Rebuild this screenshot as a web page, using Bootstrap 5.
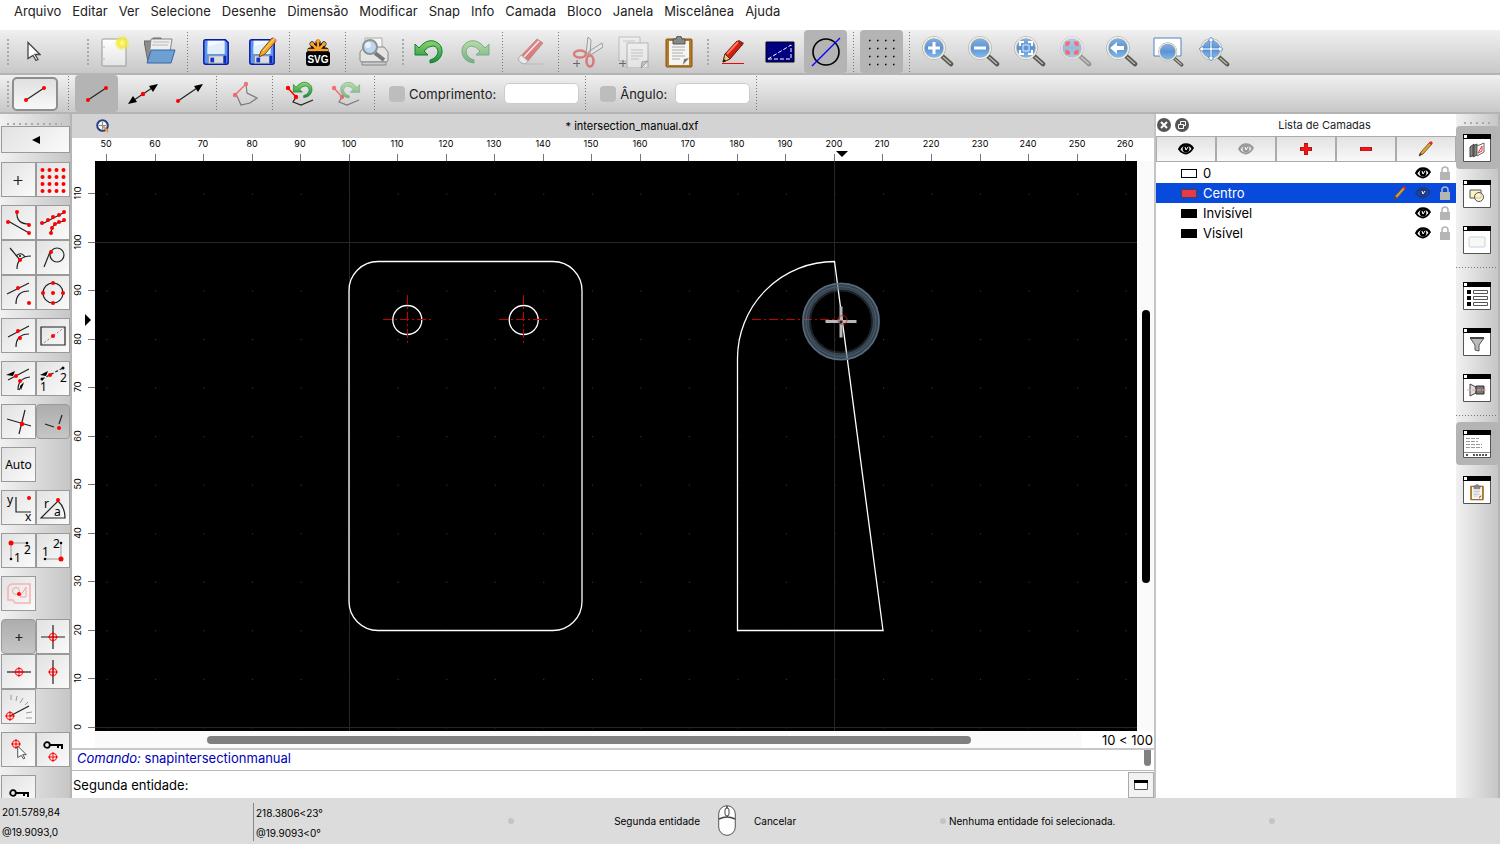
<!DOCTYPE html>
<html lang="pt">
<head>
<meta charset="utf-8">
<meta name="viewport" content="width=device-width, initial-scale=1">
<title>intersection_manual.dxf</title>
<link href="https://cdn.jsdelivr.net/npm/bootstrap@5.3.0/dist/css/bootstrap.min.css" rel="stylesheet">
<style>
body{font-family:Inter,"Liberation Sans",sans-serif;font-size:13px;line-height:20px;color:#000;background:#fff}
svg{display:block;flex:none}
button{border:0;background:none;padding:0;color:#000}
.menubar{height:30px;padding:0 14px 8px;gap:11px}
.menubar a{color:#222;text-decoration:none}
.toolstrip{background:linear-gradient(#f0f0f0,#c8c8c8);border-bottom:2px solid #b4b4b4;padding-left:3px;gap:3px}
.menubar,.toolstrip,.status{flex-shrink:0}
.strip-main{height:45px}
.strip-opts{height:39px}
.tool{width:43px;height:100%;display:flex;align-items:center;justify-content:center;border-radius:4px;flex:none}
.tool.active{background:#b4b4b4}
.pick{margin-right:25px}
.current{width:46px;height:34px;border:2px solid #8e8e8e;border-radius:5px;background:linear-gradient(#e0e0e0,#f8f8f8)}
.divider{width:7px;height:40px;flex:none;background:repeating-linear-gradient(#777 0 1px,transparent 1px 3px) center/1px 100% no-repeat}
.strip-opts .divider{height:35px}
.grip{width:6px;height:26px;flex:none;background:repeating-linear-gradient(#aaa 0 2px,transparent 2px 4px) right/2px 100% no-repeat}
.off{opacity:.5}
.optcheck{appearance:none;width:16px;height:16px;border-radius:4px;background:#bdbdbd;margin:0}
.optfield{width:75px;height:21px;border:1px solid #ccc;border-radius:5px;background:#fff}
.strip-opts label{color:#222;line-height:20px}
.side{width:72px;flex:none;overflow:hidden;background:linear-gradient(90deg,#f1f1f1,#c6c6c6);border-right:2px solid #b5b5b5;padding:9px 0 0 1px}
.dots-h{height:2px;margin:0 8px 1px 6px;background:repeating-linear-gradient(90deg,#aaa 0 2px,transparent 2px 6px)}
.key{width:100%;height:35px;border:1px solid #9a9a9a;background:linear-gradient(135deg,#e2e2e2,#fafafa);display:flex;align-items:center;justify-content:center}
.key.wide{height:27px;margin-bottom:9px}
.key.active{background:linear-gradient(#adadad,#c6c6c6);border-radius:4px}
.keys{display:grid;grid-template-columns:35px 34px;margin-bottom:8px}
.auto{font-family:"Noto Sans","DejaVu Sans",sans-serif;font-size:12px}
.tabline{height:24px;background:#d3d3d3;padding-left:24px;font-size:11px}
.sheet{display:grid;grid-template-columns:23px minmax(0,1fr) 17px;grid-template-rows:23px minmax(0,1fr) 17px}
.doc{border-right:2px solid #c4c4c4}
.paper{background:#000}
.trough{background:#fafafa}
.thumb-v{width:8px;height:273px;border-radius:4px;background:#000;margin:149px auto 0 5px}
.thumb-h{height:8px;border-radius:4px;background:#7f7f7f;margin:5px 111px 0 112px}
.zoomval{width:72px;background:#fff;line-height:18px;text-align:right;padding-right:1px}
.log{height:23px;border-top:2px solid #c8c8c8;border-bottom:1px solid #b8b8b8;color:#0000b8;padding-left:5px;line-height:17px}
.log-thumb{width:7px;height:16px;background:#808080;border-radius:0 0 4px 4px;margin-right:3px}
.prompt-row{height:27px;padding-left:1px}
.prompt-row input{border:0;outline:0;height:24px;min-width:0}
.prompt-row button{width:26px;height:26px;border:1px solid #aaa;background:#f2f2f2}
.layers{width:300px;flex:none}
.layers header{height:22px;font-size:11px;line-height:22px;padding-left:1px;gap:4px;color:#222}
.layer-tools button{height:26px;border:1px solid #ababab;background:linear-gradient(#e2e2e2,#f9f9f9);flex:1}
.layer-list{padding-top:1px}
.layer{height:20px;padding-left:25px;padding-right:5px}
.layer.sel{background:#084bdc;color:#fff}
.chip{width:16px;height:9px;border:1px solid #000;margin-right:6px}
.dock{width:44px;flex:none;background:linear-gradient(90deg,#f1f1f1,#c6c6c6);border-right:2px solid #b5b5b5;padding-top:8px;gap:2px}
.dock .dots-h{width:26px;margin:0}
.dock .tool{height:43px;margin-bottom:1px}
.divider-h{height:7px;width:100%;flex:none;margin-bottom:1px;background:repeating-linear-gradient(90deg,#777 0 1px,transparent 1px 3px) center/100% 1px no-repeat}
.status{height:46px;background:#dcdcdc;font-size:10px;line-height:20px}
.coord{width:253px;padding:4px 2px 0}
.coord+.coord{width:251px;border-left:1px solid #888;margin-top:5px;padding-top:0;height:38px}
.led{width:6px;height:6px;border-radius:50%;background:#c4c4c4;flex:none}
.hint{display:grid;grid-template-columns:1fr auto 1fr;gap:18px;align-items:center}
.note{width:323px;padding-left:3px}
.tail{width:225px}
.ink{fill:none;stroke:#222;stroke-width:1.2}
.pt{fill:#f00}
</style>
</head>
<body>
<svg width="0" height="0" class="position-absolute" aria-hidden="true">
<defs>
<linearGradient id="gb" x2="0" y2="1"><stop stop-color="#86b2e2"/><stop offset=".5" stop-color="#5d93d4"/><stop offset="1" stop-color="#82bdf4"/></linearGradient>
<linearGradient id="gp" x2="0" y2="1"><stop stop-color="#fff"/><stop offset="1" stop-color="#e4e4e4"/></linearGradient>
<linearGradient id="gg" x2="0" y2="1"><stop stop-color="#8ed46b"/><stop offset="1" stop-color="#1c8c3b"/></linearGradient>
<radialGradient id="gy"><stop stop-color="#fffbb0"/><stop offset=".5" stop-color="#f3ea3c"/><stop offset="1" stop-color="#f3ea3c" stop-opacity="0"/></radialGradient>
</defs>
<symbol id="lens" viewBox="0 0 32 32"><path d="M20 20l9 8" stroke="#55584f" stroke-width="4.500" stroke-linecap="round"/><path d="M21 21l8 7" stroke="#b9bab3" stroke-width="1.5"/><circle cx="12" cy="12" r="10.5" fill="url(#gb)" stroke="#a9aca4" stroke-width="2.6"/><circle cx="12" cy="12" r="10.5" fill="none" stroke="#eeeeec" stroke-width="1.4"/></symbol>
<symbol id="floppy" viewBox="0 0 32 32"><path d="M5 3h21l3 3v21q0 2-2 2H5q-2 0-2-2V5q0-2 2-2z" fill="#5d94ec" stroke="#0b1ca8" stroke-width="1.6"/><path d="M7 4h18v14H7z" fill="#f6faff"/><path d="M7 10l18-5v13H7z" fill="#e2eefb"/><path d="M8 20h16v8H8z" fill="#dadde6" stroke="#899"/><path d="M10 22h4v5h-4z" fill="#1635c8"/><path d="M24 20h3v8h-3z" fill="#0c2ac0"/></symbol>
<symbol id="eye" viewBox="0 0 16 12"><path d="M1 7Q3 1.500 8 1.500q5 0 7 4.500" fill="none" stroke="currentColor" stroke-width="2.600"/><path d="M1.500 7q6.500 7.500 13-1" fill="none" stroke="currentColor" stroke-width="1.8"/><circle cx="8" cy="6" r="3.4" fill="currentColor"/><path d="M7 4l1 3 2-3" stroke="#fff" fill="none"/></symbol>
<symbol id="lock" viewBox="0 0 12 14"><path d="M3 7V4q0-3 3-3t3 3v3" fill="none" stroke="#b5b5b5" stroke-width="1.6"/><path d="M1 6h10v8H1z" fill="#b5b5b5"/></symbol>
<symbol id="pencil" viewBox="0 0 16 16"><path d="M1 15l2-4 9-10 2 2-9 10z" fill="#dca33a" stroke="#8a5c22"/><path d="M11 2l2-2 2 2-2 2z" fill="#e22"/><path d="M1 15l1-3 2 1z" fill="#333"/></symbol>
<symbol id="win" viewBox="0 0 28 28"><path d="M.5.500h27v27H.5z" fill="#fff" stroke="#555"/><path d="M0 0h28v5H0z"/><path d="M1 1h3v3H1z" fill="#fff"/></symbol>
<symbol id="target" viewBox="0 0 10 10"><circle cx="5" cy="5" r="3.700" fill="none" stroke="#f00"/><path d="M0 5h10M5 0v10" stroke="#f00"/></symbol>
<symbol id="back" viewBox="0 0 32 32"><path d="M2 8l4 4Q13 3 21 5q9 3 8 12-2 9-12 10v-3q7-2 8-8 0-5-5-6-5 0-9 5l4 4H2z" fill="url(#gg)" stroke="#11803a"/></symbol>
<symbol id="key" viewBox="0 0 20 10"><circle cx="4" cy="5" r="2.800" fill="none" stroke="#000" stroke-width="1.800"/><path d="M7 5h12v4M15 5v3" fill="none" stroke="#000" stroke-width="2"/></symbol>
<symbol id="arrow" viewBox="0 0 14 20"><path d="M1 1l12 12H8l3 5-2 1-3-5-5 3z" fill="#fff" stroke="#444" stroke-width="1.300"/></symbol>
<symbol id="clip" viewBox="0 0 32 32"><rect x="3" y="3" width="26" height="28" rx="1" fill="#b5792a" stroke="#835410"/><path d="M6 5h20v24H6z" fill="#f5f5f3"/><path d="M9 11h13M9 14h13M9 17h11M9 20h13M9 23h8" stroke="#aaa"/><path d="M20 29l1-6 5-1z" fill="#777"/><path d="M10 3h3q0-3 3-3t3 3h3v5H10z" fill="#868a83" stroke="#555"/></symbol>
</svg>
<div class="vh-100 d-flex flex-column overflow-hidden">
<nav class="menubar d-flex align-items-center" aria-label="Menu">
<a href="#">Arquivo</a><a href="#">Editar</a><a href="#">Ver</a><a href="#">Selecione</a><a href="#">Desenhe</a><a href="#">Dimensão</a><a href="#">Modificar</a><a href="#">Snap</a><a href="#">Info</a><a href="#">Camada</a><a href="#">Bloco</a><a href="#">Janela</a><a href="#">Miscelânea</a><a href="#">Ajuda</a>
</nav>
<div class="toolstrip strip-main d-flex align-items-center" role="toolbar">
<span class="grip"></span>
<button class="tool pick" aria-label="Selecionar"><svg width="14" height="21"><use href="#arrow"/></svg></button>
<span class="grip"></span>
<button class="tool" aria-label="Novo"><svg width="32" height="32"><rect x="4" y="3" width="24" height="27" rx="1" fill="url(#gp)" stroke="#999"/><path d="M6 10v2M6 22v2" stroke="#bbb"/><circle cx="24" cy="7" r="8" fill="url(#gy)"/></svg></button>
<button class="tool" aria-label="Abrir"><svg width="32" height="32"><path d="M0 5h7l2-3h8l2 3v21H4z" fill="#8c8c88" stroke="#666"/><path d="M7 3h21l-3 20H5z" fill="#eee" stroke="#888"/><path d="M9 6h16M8 9h16" stroke="#bbb"/><path d="M7 14h24l-4 13H3z" fill="#6d9fd2" stroke="#3467a4"/></svg></button>
<span class="divider"></span>
<button class="tool" aria-label="Salvar"><svg width="30" height="30"><use href="#floppy"/></svg></button>
<button class="tool" aria-label="Salvar como"><svg width="32" height="32"><use href="#floppy" x="1" y="1" width="30" height="30"/><path d="M13 21l2-6L26 2l4 3-11 13z" fill="#f7a928" stroke="#7f4710"/><path d="M26 2l1-1 4 3-1 2z" fill="#e87"/><path d="M17 15l11-12" stroke="#ffe08a"/></svg></button>
<span class="divider"></span>
<button class="tool" aria-label="Exportar SVG"><svg width="32" height="32"><g stroke="#000" stroke-width="5" stroke-linecap="round"><path d="M16 15V6M16 15L10 8M16 15l6-7M16 14H8M16 14h8"/></g><rect x="4" y="15" width="24" height="15" rx="3"/><g stroke="#f9a12b" stroke-width="2.500" stroke-linecap="round"><path d="M16 14V6M16 14L10 8M16 14l6-6M14 14H7M18 14h7"/></g><g fill="#f9a12b"><circle cx="16" cy="5" r="2"/><circle cx="10" cy="8" r="2"/><circle cx="22" cy="8" r="2"/></g><text x="16" y="27" text-anchor="middle" font-family="Liberation Sans,sans-serif" font-weight="700" font-size="10" fill="#fff">SVG</text></svg></button>
<span class="divider"></span>
<button class="tool" aria-label="Visualizar impressão"><svg width="32" height="32"><path d="M7 2h17v14H7z" fill="#f5f5f5" stroke="#aaa"/><path d="M2 16l4-5h20l4 5v8q0 2-2 2H4q-2 0-2-2z" fill="#e4e4e2" stroke="#888"/><path d="M4 26h24v3H4z" fill="#ccc" stroke="#888"/><path d="M17 17l9 7" stroke="#777" stroke-width="4"/><circle cx="12" cy="11" r="7" fill="#bdd6f4" stroke="#8d938d" stroke-width="2"/><circle cx="10" cy="9" r="3" fill="#e8f2fc"/></svg></button>
<span class="grip"></span>
<button class="tool" aria-label="Desfazer"><svg width="32" height="32"><use href="#back"/></svg></button>
<button class="tool off" aria-label="Refazer"><svg width="32" height="32"><use href="#back" transform="matrix(-1 0 0 1 32 0)"/></svg></button>
<span class="divider"></span>
<button class="tool off" aria-label="Apagar"><svg width="32" height="32"><path d="M9 28h19" stroke="#bbb" stroke-width="2"/><path d="M6 20L22 3l6 4-16 19z" fill="#d92222" stroke="#a33"/><path d="M9 21L24 5" stroke="#fff" stroke-width="1.500"/><path d="M3 23l3-4 7 6-3 3-4-1z" fill="#fff" stroke="#888"/></svg></button>
<span class="divider"></span>
<button class="tool off" aria-label="Cortar"><svg width="32" height="32"><path d="M15 18L17 1l3 3-1 14zM17 16L31 7l1 4-14 9z" fill="#eee" stroke="#555"/><ellipse cx="9" cy="18" rx="6" ry="3.500" fill="none" stroke="#d22" stroke-width="2.500"/><ellipse cx="19" cy="25" rx="3.500" ry="5.500" fill="none" stroke="#d22" stroke-width="2.500"/><path d="M6 24v7M2 27.500h7" stroke="#000"/></svg></button>
<button class="tool off" aria-label="Copiar"><svg width="32" height="32"><path d="M2 1h21v24H2z" fill="#f3f3f3" stroke="#999"/><path d="M10 7h21v25H10z" fill="#fafafa" stroke="#888"/><path d="M14 14h12M14 17h12M14 20h12M6 5h12M14 23h8" stroke="#aaa"/><path d="M24 32l1-6 6-1z" fill="#bbb" stroke="#666"/><path d="M6 24v7M2 27.500h7" stroke="#000"/></svg></button>
<button class="tool" aria-label="Colar"><svg width="32" height="32"><use href="#clip"/></svg></button>
<span class="grip"></span>
<button class="tool" aria-label="Desenhar"><svg width="32" height="32"><path d="M5 26l2-8L19 5l5 4-12 14z" fill="#d81c10" stroke="#5d100a"/><path d="M19 5l2-1 5 3-2 3z" fill="#96211d"/><path d="M9 18L20 6" stroke="#ff7860" stroke-width="2"/><path d="M5 26l2-8 5 5z" fill="#e9c58f" stroke="#5b3d20"/><path d="M5 26l1-3 2 2z"/><path d="M4 27.500h22" stroke="#f00"/></svg></button>
<button class="tool" aria-label="Modo rascunho"><svg width="32" height="32"><path d="M2 6h28v20H2z" fill="#000080" stroke="#001"/><path d="M4 23L27 9v14z" fill="none" stroke="#fff" stroke-dasharray="4 2"/></svg></button>
<button class="tool active" aria-label="Anti-serrilhado"><svg width="32" height="32"><circle cx="16" cy="16" r="13" fill="none" stroke="#000" stroke-width="1.600"/><path d="M2 30L30 2" stroke="#00f" stroke-width="1.200"/></svg></button>
<span class="divider"></span>
<button class="tool active" aria-label="Grade"><svg width="32" height="32"><path d="M3 4.500h28M3 12.500h28M3 20.500h28M3 28.500h28" stroke="#000" stroke-width="1.500" stroke-dasharray="1.500 6.500"/></svg></button>
<span class="divider"></span>
<button class="tool" aria-label="Ampliar"><svg width="32" height="32"><use href="#lens"/><path d="M12 6v12M6 12h12" stroke="#fff" stroke-width="3"/></svg></button>
<button class="tool" aria-label="Reduzir"><svg width="32" height="32"><use href="#lens"/><path d="M6 12h12" stroke="#fff" stroke-width="3"/></svg></button>
<button class="tool" aria-label="Zoom automático"><svg width="32" height="32"><use href="#lens"/><path d="M6 10V6h4M14 6h4v4M18 14v4h-4M10 18H6v-4" fill="none" stroke="#fff" stroke-width="2"/><path d="M9 9h6v6H9z" fill="none" stroke="#dbe9f9"/></svg></button>
<button class="tool off" aria-label="Zoom na seleção"><svg width="32" height="32"><use href="#lens"/><path d="M7 10V7h3M14 7h3v3M17 14v3h-3M10 17H7v-3" fill="none" stroke="#f00" stroke-width="3"/></svg></button>
<button class="tool" aria-label="Zoom anterior"><svg width="32" height="32"><use href="#lens"/><path d="M4 12l7-6v4h7v4h-7v4z" fill="#fff"/></svg></button>
<button class="tool" aria-label="Zoom na janela"><svg width="32" height="32"><path d="M2 2h27v18H2z" fill="#fff" stroke="#5380bd"/><use href="#lens" x="6" y="6" width="26" height="26"/></svg></button>
<button class="tool" aria-label="Deslocar"><svg width="32" height="32"><use href="#lens" x="2" y="2" width="30" height="30"/><path d="M13 1l3 4h-2v7h7v-2l4 3-4 3v-2h-7v7h2l-3 4-3-4h2v-7H5v2l-4-3 4-3v2h7V5h-2z" fill="#fff" stroke="#4f89cf" stroke-width=".8"/></svg></button>
</div>
<div class="toolstrip strip-opts d-flex align-items-center" role="toolbar">
<span class="grip"></span>
<button class="current d-flex align-items-center justify-content-center me-1" aria-label="Ferramenta atual: linha"><svg width="32" height="24"><path class="ink" d="M7 18L25 6"/><circle class="pt" cx="7" cy="18" r="2"/><circle class="pt" cx="25" cy="6" r="2"/></svg></button>
<span class="divider"></span>
<button class="tool active" aria-label="Linha de 2 pontos"><svg width="32" height="24"><path class="ink" d="M7 18L25 6"/><circle class="pt" cx="7" cy="18" r="2"/><circle class="pt" cx="25" cy="6" r="2"/></svg></button>
<button class="tool" aria-label="Linha infinita"><svg width="32" height="24"><path class="ink" d="M4 20L28 4"/><path d="M1 22l5-8 4 6zM31 2l-9 2 4 6z"/><circle class="pt" cx="16" cy="12" r="2.200"/></svg></button>
<button class="tool" aria-label="Raio"><svg width="32" height="24"><path class="ink" d="M5 19L27 4"/><path d="M30 2l-9 2 4 6z"/><circle class="pt" cx="5" cy="19" r="2"/></svg></button>
<span class="divider"></span>
<button class="tool off" aria-label="Fechar polígono"><svg width="32" height="28"><path class="ink" d="M17 4l1 9 10 5-7 5-9 2-5-11"/><path d="M6 15L17 4" stroke="#f00" stroke-width="1.500"/><circle class="pt" cx="6" cy="15" r="2.200"/><circle class="pt" cx="17" cy="4" r="2.200"/></svg></button>
<span class="divider"></span>
<button class="tool" aria-label="Desfazer segmento"><svg width="32" height="30"><use href="#back" x="7" y="0" width="22" height="22"/><path d="M3 9l8 9" stroke="#f00" stroke-width="1.500"/><path class="ink" d="M11 18l-3 5 8 3 12-5"/><circle class="pt" cx="3" cy="9" r="2.200"/><circle class="pt" cx="11" cy="18" r="2.200"/></svg></button>
<button class="tool off" aria-label="Refazer segmento"><svg width="32" height="30"><use href="#back" transform="matrix(-.7 0 0 .7 30 0)" width="32" height="32"/><path d="M3 9l8 9" stroke="#f00" stroke-width="1.500"/><path class="ink" d="M11 18l-3 5 8 3 12-5"/><circle class="pt" cx="3" cy="9" r="2.200"/><circle class="pt" cx="11" cy="18" r="2.200"/></svg></button>
<span class="divider"></span>
<div class="d-flex align-items-center ms-2"><input type="checkbox" class="optcheck" id="cl"><label for="cl" class="ps-1 pe-2">Comprimento:</label><input class="optfield" aria-label="Comprimento"></div>
<span class="divider"></span>
<div class="d-flex align-items-center ms-2"><input type="checkbox" class="optcheck" id="ca"><label for="ca" class="ps-1 pe-2">Ângulo:</label><input class="optfield" aria-label="Ângulo"></div>
<span class="divider"></span>
</div>
<main class="d-flex flex-fill" style="min-height:0">
<aside class="side" aria-label="Ferramentas de snap">
<div class="dots-h"></div>
<button class="key wide" aria-label="Voltar"><svg width="10" height="8"><path d="M1 4l8-4v8z"/></svg></button>
<div class="keys">
<button class="key" aria-label="Livre"><svg width="32" height="32"><path class="ink" d="M15 12v9M10.500 16.500h9"/></svg></button>
<button class="key" aria-label="Grade"><svg width="32" height="32"><path d="M5.500 6h24M5.500 13h24M5.500 20h24M5.500 27h24" stroke="#f00" stroke-width="4" stroke-linecap="round" stroke-dasharray="0 7"/></svg></button>
</div>
<div class="keys">
<button class="key" aria-label="Pontos finais"><svg width="32" height="32"><path class="ink" d="M14 5q-1 12 12 12M5 14l21 12"/><circle class="pt" cx="14" cy="5" r="2"/><circle class="pt" cx="26" cy="18" r="2"/><circle class="pt" cx="5" cy="15" r="2"/><circle class="pt" cx="26" cy="26" r="2"/></svg></button>
<button class="key" aria-label="Na entidade"><svg width="32" height="32"><path class="ink" d="M5 17L28 5M14 27q0-12 14-13"/><g class="pt"><circle cx="5" cy="16" r="2"/><circle cx="11" cy="13" r="2"/><circle cx="16" cy="10" r="2"/><circle cx="22" cy="8" r="2"/><circle cx="27" cy="5" r="2"/><circle cx="14" cy="26" r="2"/><circle cx="15" cy="21" r="2"/><circle cx="18" cy="17" r="2"/><circle cx="22" cy="15" r="2"/><circle cx="27" cy="13" r="2"/></g></svg></button>
<button class="key" aria-label="Perpendicular"><svg width="32" height="32"><path class="ink" d="M7 6l10 12M14 27q0-13 14-13"/><path class="ink" stroke-width=".6" d="M13 14q5-5 9 1"/><circle cx="17" cy="14" r="1"/><circle class="pt" cx="17" cy="18" r="2"/></svg></button>
<button class="key" aria-label="Tangente"><svg width="32" height="32"><circle class="ink" cx="20" cy="13" r="7"/><path class="ink" d="M13 10L7 25"/><circle class="pt" cx="14" cy="10" r="2"/></svg></button>
<button class="key" aria-label="Referência"><svg width="32" height="32"><path class="ink" d="M4 17L26 6M13 27q0-13 13-13"/><circle class="pt" cx="15" cy="11" r="2"/><circle class="pt" cx="26" cy="26" r="2"/></svg></button>
<button class="key" aria-label="Centro"><svg width="32" height="32"><circle class="ink" cx="16" cy="16" r="10"/><g class="pt"><circle cx="16" cy="16" r="2"/><circle cx="16" cy="6" r="2"/><circle cx="16" cy="26" r="2"/><circle cx="6" cy="16" r="2"/><circle cx="26" cy="16" r="2"/></g></svg></button>
</div>
<div class="keys">
<button class="key" aria-label="Ponto médio"><svg width="32" height="32"><path class="ink" d="M5 17L26 6M13 27q0-13 13-13"/><circle class="pt" cx="15" cy="11" r="2"/><circle class="pt" cx="17" cy="18" r="2"/></svg></button>
<button class="key" aria-label="Meio da diagonal"><svg width="32" height="32"><path class="ink" d="M4 7h24v18H4z"/><path d="M4 25L28 7" stroke="#555" stroke-width=".7" stroke-dasharray="2 2"/><circle class="pt" cx="16" cy="16" r="2"/></svg></button>
</div>
<div class="keys">
<button class="key" aria-label="Distância"><svg width="32" height="32"><path class="ink" d="M5 17L26 6M15 27q0-12 12-13M16 27l4-6"/><path d="M3 12l9-4-2 5zM21 19l-3 8-1-4z"/><circle class="pt" cx="13" cy="13" r="2"/><circle class="pt" cx="17" cy="18" r="2"/></svg></button>
<button class="key" aria-label="Distância do ponto"><svg width="32" height="32"><path class="ink" stroke-dasharray="3 2" d="M5 16L26 5"/><path d="M3 12l8-4-2 5z"/><circle cx="5" cy="16" r="1.500"/><circle cx="26" cy="5" r="1.500"/><circle class="pt" cx="13" cy="12" r="2"/><text class="auto" x="3" y="28">1</text><text class="auto" x="23" y="19">2</text></svg></button>
</div>
<div class="keys">
<button class="key" aria-label="Interseção"><svg width="32" height="32"><path class="ink" d="M4 13l24 7M22 4l-6 24"/><circle class="pt" cx="19" cy="18" r="2.200"/></svg></button>
<button class="key active" aria-label="Interseção manual"><svg width="32" height="32"><path class="ink" d="M8 18l9 3M25 9l-3 9"/><circle class="pt" cx="22" cy="22" r="2"/></svg></button>
</div>
<div class="keys"><button class="key auto">Auto</button></div>
<div class="keys">
<button class="key" aria-label="Coordenada XY"><svg width="32" height="32"><path class="ink" d="M13 5v15h15"/><circle class="pt" cx="26" cy="6" r="2"/><text class="auto" x="4" y="12">y</text><text class="auto" x="22" y="29">x</text></svg></button>
<button class="key" aria-label="Coordenada polar"><svg width="32" height="32"><path class="ink" d="M4 26L21 9q7 6 7 17z"/><circle class="pt" cx="21" cy="8" r="2"/><text class="auto" x="7" y="16">r</text><text class="auto" x="17" y="24">a</text></svg></button>
</div>
<div class="keys">
<button class="key" aria-label="X de 1, Y de 2"><svg width="32" height="32"><path d="M8 24V8h16v4" fill="none" stroke="#999"/><circle class="pt" cx="8" cy="8" r="2.500"/><circle cx="24" cy="8" r="1.300"/><circle cx="8" cy="24" r="1.300"/><text class="auto" x="11" y="27">1</text><text class="auto" x="21" y="19">2</text></svg></button>
<button class="key" aria-label="X de 2, Y de 1"><svg width="32" height="32"><path d="M8 24h16V8" fill="none" stroke="#999"/><circle class="pt" cx="24" cy="24" r="2.500"/><circle cx="24" cy="8" r="1.300"/><circle cx="8" cy="24" r="1.300"/><text class="auto" x="5" y="21">1</text><text class="auto" x="16" y="13">2</text></svg></button>
</div>
<div class="keys"><button class="key" aria-label="Centroide"><svg width="32" height="32"><path d="M5 11q0-5 5-5h17v19H12l-2-3H5z" fill="none" stroke="#f4b4b4" stroke-width="1.600"/><circle cx="13" cy="13" r="3.500" fill="none" stroke="#f4a4a4"/><path d="M17 19h6V9z" fill="none" stroke="#f4a4a4"/><circle class="pt" cx="16" cy="16" r="2"/></svg></button></div>
<div class="keys">
<button class="key active" aria-label="Sem restrição"><svg width="32" height="32"><path class="ink" d="M16 13v7M12.500 16.500h7"/></svg></button>
<button class="key" aria-label="Ortogonal"><svg width="32" height="32"><path class="ink" d="M4 16h24M16 4v24"/><use href="#target" x="11" y="11" width="10" height="10"/></svg></button>
<button class="key" aria-label="Horizontal"><svg width="32" height="32"><path class="ink" d="M4 16h24"/><use href="#target" x="11" y="11" width="10" height="10"/></svg></button>
<button class="key" aria-label="Vertical"><svg width="32" height="32"><path class="ink" d="M16 4v24"/><use href="#target" x="11" y="11" width="10" height="10"/></svg></button>
<button class="key" aria-label="Ângulo"><svg width="32" height="32"><path class="ink" d="M7 25l19-10"/><path d="M8 4v5M14 5l-1 5M20 7l-3 5M25 11l-3 3M23 22l6-1M23 27h6" stroke="#999"/><use href="#target" x="2" y="20" width="10" height="10"/></svg></button>
</div>
<div class="keys">
<button class="key" aria-label="Definir zero relativo"><svg width="32" height="32"><use href="#target" x="8" y="5" width="10" height="10"/><use href="#arrow" x="14" y="11" width="10" height="15"/></svg></button>
<button class="key" aria-label="Travar zero relativo"><svg width="32" height="32"><use href="#key" x="6" y="6" width="20" height="10"/><use href="#target" x="11" y="18" width="10" height="10"/></svg></button>
</div>
<div class="keys"><button class="key" aria-label="Travar"><svg width="32" height="32"><use href="#key" x="6" y="11" width="20" height="10"/></svg></button></div>
</aside>
<section class="doc d-flex flex-column flex-fill" style="min-width:0">
<div class="tabline d-flex align-items-center"><svg width="14" height="14"><circle cx="6.500" cy="6.500" r="5.300" fill="#f2f5fb" stroke="#26407c" stroke-width="2"/><path d="M3 6.500h7M6.500 3v7" stroke="#889"/><path d="M7 7l5 6" stroke="#e89a3a" stroke-width="2"/></svg><span class="flex-fill text-center">* intersection_manual.dxf</span></div>
<div class="sheet flex-fill" style="min-height:0">
<div></div>
<svg id="rulerX" width="100%" height="23"><path d="M741 13h12l-6 6z"/></svg>
<div></div>
<svg id="rulerY" width="23" height="100%"><path d="M13 153v12l6-6z"/></svg>
<svg class="paper" width="100%" height="100%" role="img" aria-label="Desenho">
<defs><pattern id="dots" x="-38" y="-16" width="48.530" height="48.530" patternUnits="userSpaceOnUse"><path d="M1 .5h1" stroke="#444"/></pattern></defs>
<rect x="0" y="0" width="100%" height="100%" fill="url(#dots)"/>
<path d="M254.500 0v570M739.500 0v570M0 81.500h1042M0 566.500h1042" stroke="#262626"/>
<g fill="none" stroke="#fff" stroke-width="1.300"><rect x="254" y="100.500" width="233" height="369" rx="29"/><circle cx="312.300" cy="159" r="14.500"/><circle cx="428.700" cy="159" r="14.500"/><path d="M642.500 469.500V198A97 97 0 0 1 739.500 100.500L788 469.500z"/></g>
<g stroke="#c80000" stroke-dasharray="9 3 2 3"><path d="M288 158.500h49M312.500 134v49M404 158.500h50M428.500 134v49M657 158.500h88"/></g>
<g fill="none" stroke="#566b7e"><circle cx="746" cy="160.500" r="35.500" stroke-width="7" opacity=".6"/><circle cx="746" cy="160.500" r="38" stroke-width="1.500"/><circle cx="746" cy="160.500" r="35" opacity=".7"/><circle cx="746" cy="160.500" r="31.500" stroke-width="3" opacity=".3"/></g>
<path d="M730.500 160.500h31M746 145.500v31" stroke="#b8b8b8" stroke-width="3"/><circle cx="747.500" cy="159" r="4.500" fill="none" stroke="#d22" stroke-width=".8"/><path d="M744.500 159.500h3v3h-3z" fill="#222"/>
</svg>
<div class="trough"><div class="thumb-v"></div></div>
<div></div>
<div class="d-flex" style="grid-column:2 / 4"><div class="trough flex-fill"><div class="thumb-h"></div></div><div class="zoomval">10 &lt; 100</div></div>
</div>
<div class="log d-flex justify-content-between"><span><em>Comando:</em> snapintersectionmanual</span><span class="log-thumb"></span></div>
<div class="prompt-row d-flex align-items-center"><label for="cmd">Segunda entidade:</label><input id="cmd" class="flex-fill"><button class="d-flex align-items-center justify-content-center" aria-label="Janela de comando"><svg width="14" height="10"><path d="M.5.500h13v9H.5z" fill="#fff" stroke="#555"/><path d="M0 0h14v3H0z"/></svg></button></div>
</section>
<section class="layers">
<header class="d-flex align-items-center">
<button aria-label="Fechar"><svg width="14" height="14"><circle cx="7" cy="7" r="7" fill="#555"/><path d="M4 4l6 6M10 4l-6 6" stroke="#fff" stroke-width="2"/></svg></button>
<button aria-label="Destacar"><svg width="14" height="14"><circle cx="7" cy="7" r="7" fill="#555"/><path d="M5.500 6V3.500h5v4H8.500M3.500 6.500h5v4h-5z" fill="none" stroke="#fff"/></svg></button>
<span class="flex-fill text-center">Lista de Camadas</span></header>
<div class="layer-tools d-flex">
<button class="d-flex align-items-center justify-content-center" aria-label="Mostrar todas"><svg width="16" height="12"><use href="#eye"/></svg></button>
<button class="d-flex align-items-center justify-content-center" style="color:#999" aria-label="Ocultar todas"><svg width="16" height="12"><use href="#eye"/></svg></button>
<button class="d-flex align-items-center justify-content-center" aria-label="Adicionar"><svg width="12" height="12"><path d="M6 0v12M0 6h12" stroke="#822" stroke-width="4"/><path d="M6 1v10M1 6h10" stroke="#f11" stroke-width="3"/></svg></button>
<button class="d-flex align-items-center justify-content-center" aria-label="Remover"><svg width="12" height="12"><path d="M0 6h12" stroke="#822" stroke-width="4"/><path d="M1 6h10" stroke="#f11" stroke-width="3"/></svg></button>
<button class="d-flex align-items-center justify-content-center" aria-label="Editar"><svg width="16" height="16"><use href="#pencil"/></svg></button>
</div>
<div class="layer-list">
<div class="layer d-flex align-items-center"><span class="chip"></span><span class="flex-fill">0</span><svg class="me-2" width="16" height="12"><use href="#eye"/></svg><svg width="12" height="14"><use href="#lock"/></svg></div>
<div class="layer sel d-flex align-items-center"><span class="chip" style="background:#e8384a;border-color:#444"></span><span class="flex-fill">Centro</span><svg class="me-2" width="14" height="14"><use href="#pencil"/></svg><svg class="me-2" width="16" height="12" color="#223a78"><use href="#eye"/></svg><svg width="12" height="14"><use href="#lock"/></svg></div>
<div class="layer d-flex align-items-center"><span class="chip bg-black"></span><span class="flex-fill">Invisível</span><svg class="me-2" width="16" height="12"><use href="#eye"/></svg><svg width="12" height="14"><use href="#lock"/></svg></div>
<div class="layer d-flex align-items-center"><span class="chip bg-black"></span><span class="flex-fill">Visível</span><svg class="me-2" width="16" height="12"><use href="#eye"/></svg><svg width="12" height="14"><use href="#lock"/></svg></div>
</div>
</section>
<aside class="dock d-flex flex-column align-items-center" aria-label="Janelas">
<div class="dots-h flex-shrink-0"></div>
<button class="tool active" aria-label="Camadas"><svg width="28" height="28"><use href="#win"/><path d="M7 13l4-3v11l-4 2zM10 12l4-2v11l-4 2z" fill="#888" stroke="#444"/><path d="M14 12l7-3v9l-7 4z" fill="#fff" stroke="#666"/><path d="M15 19l4-7v5z" fill="none" stroke="#e33"/></svg></button>
<button class="tool" aria-label="Blocos"><svg width="28" height="28"><use href="#win"/><path d="M7 10h11v8H7z" fill="#fdf2c6" stroke="#555"/><circle cx="16" cy="17" r="4.500" fill="#fdf2c6" fill-opacity=".7" stroke="#555"/></svg></button>
<button class="tool" aria-label="Vistas"><svg width="28" height="28"><use href="#win"/><rect x="6" y="11" width="16" height="10" rx="1" fill="#f8f8f5" stroke="#c3d2e4"/></svg></button>
<span class="divider-h"></span>
<button class="tool" aria-label="Propriedades"><svg width="28" height="28"><use href="#win"/><path d="M4 8h4v4H4zM4 14h4v4H4zM4 20h4v4H4z"/><path d="M10.500 8.500h14v3h-14zM10.500 14.500h14v3h-14zM10.500 20.500h14v3h-14z" fill="none" stroke="#555"/></svg></button>
<button class="tool" aria-label="Filtro"><svg width="28" height="28"><use href="#win"/><path d="M7 10h14l-5 7v6l-4-1v-5z" fill="#bbb" stroke="#555"/><path d="M7 10h14" stroke="#444" stroke-width="2"/></svg></button>
<button class="tool" aria-label="Projeção"><svg width="28" height="28"><use href="#win"/><path d="M7 10l6 3v6l-6 3z" fill="#ddd" stroke="#444"/><path d="M13 12h8v8h-8z" fill="#777" stroke="#333"/><path d="M4 16h20" stroke="#f99" stroke-dasharray="4 1"/></svg></button>
<span class="divider-h"></span>
<button class="tool active" aria-label="Comando"><svg width="28" height="28"><use href="#win"/><path d="M3 8.500h13M3 11.500h12M3 14.500h16M3 17.500h16" stroke="#999" stroke-dasharray="4 1"/><path d="M1 22.500h26" stroke="#888"/><path d="M3 25h2M10 25h14" stroke="#555" stroke-width="2" stroke-dasharray="2 1"/></svg></button>
<button class="tool" aria-label="Área de transferência"><svg width="28" height="28"><use href="#win"/><use href="#clip" x="6" y="8" width="16" height="17"/></svg></button>
</aside>
</main>
<footer class="status d-flex">
<div class="coord">201.5789,84<br>@19.9093,0</div>
<div class="coord">218.3806&lt;23°<br>@19.9093&lt;0°</div>
<div class="d-flex align-items-center flex-fill">
<span class="led ms-1"></span>
<div class="hint flex-fill"><span class="text-end">Segunda entidade</span><svg width="18" height="32"><rect x=".7" y=".7" width="16.600" height="29.600" rx="8.300" fill="#fff" stroke="#555"/><path d="M1 14q8-4 16 0M9 1v11" fill="none" stroke="#444" stroke-width="1.500"/><rect x="7" y="3" width="4" height="8" rx="2" fill="#fff" stroke="#444"/></svg><span>Cancelar</span></div>
<span class="led"></span><span class="note">Nenhuma entidade foi selecionada.</span><span class="led"></span><span class="tail"></span></div>
</footer>
</div>
<script src="https://cdn.jsdelivr.net/npm/bootstrap@5.3.0/dist/js/bootstrap.bundle.min.js"></script>
<script>
// Rulers: one tick and label for every ten drawing units
var step = 48.53, xs = '', ys = '';
for (var i = 0; i < 22; i++) {
  var x = Math.round(11 + i * step);
  xs += '<path d="M' + (x + .5) + ' 16v7" stroke="#777"/><text x="' + x + '" y="9" font-size="9" text-anchor="middle">' + (50 + i * 10) + '</text>';
}
for (var j = 0; j < 12; j++) {
  var y = Math.round(566 - j * step);
  ys += '<path d="M16 ' + (y + .5) + 'h7" stroke="#777"/><text transform="translate(9 ' + y + ') rotate(-90)" font-size="9" text-anchor="middle">' + j * 10 + '</text>';
}
document.getElementById('rulerX').insertAdjacentHTML('beforeend', xs);
document.getElementById('rulerY').insertAdjacentHTML('beforeend', ys);
</script>
</body>
</html>
